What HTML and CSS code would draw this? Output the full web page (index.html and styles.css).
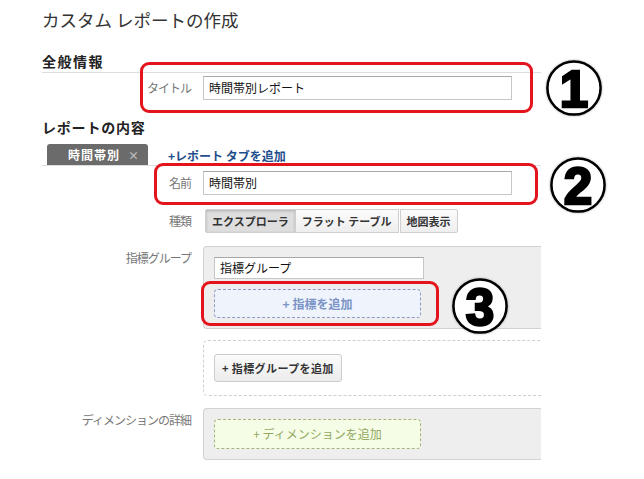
FILE: index.html
```html
<!DOCTYPE html>
<html lang="ja">
<head>
<meta charset="utf-8">
<title>カスタム レポートの作成</title>
<link rel="stylesheet" href="styles.css">
</head>
<body>
<div class="page">
  <h1 class="title">カスタム レポートの作成</h1>

  <h2 class="sec-head">全般情報</h2>
  <div class="row row-title">
    <div class="lbl">タイトル</div>
    <div class="field"><div class="txt">時間帯別レポート</div></div>
  </div>

  <h2 class="sec-head2">レポートの内容</h2>
  <div class="tabs">
    <div class="tab">時間帯別<span class="x">×</span></div>
    <a class="addtab">+レポート タブを追加</a>
  </div>

  <div class="row row-name">
    <div class="lbl">名前</div>
    <div class="field"><div class="txt">時間帯別</div></div>
  </div>

  <div class="row row-type">
    <div class="lbl">種類</div>
    <div class="field">
      <div class="btns">
        <span class="btn sel">エクスプローラ</span><span class="btn">フラット テーブル</span><span class="btn">地図表示</span>
      </div>
    </div>
  </div>

  <div class="row row-metric">
    <div class="lbl lbl-top">指標グループ</div>
    <div class="panel">
      <div class="txt txt-small">指標グループ</div>
      <div class="drop drop-blue">+ 指標を追加</div>
    </div>
  </div>

  <div class="row row-addgroup">
    <div class="lbl"></div>
    <div class="dash">
      <span class="btn-add">+ 指標グループを追加</span>
    </div>
  </div>

  <div class="row row-dim">
    <div class="lbl lbl-top">ディメンションの詳細</div>
    <div class="panel panel-dim">
      <div class="drop drop-green">+ ディメンションを追加</div>
    </div>
  </div>

  <div class="mark mark1"></div>
  <div class="mark mark2"></div>
  <div class="mark mark3"></div>

  <svg class="num num1" viewBox="0 0 60 60"><circle cx="30" cy="30" r="27.5"/><text x="30" y="49.5">1</text></svg>
  <svg class="num num2" viewBox="0 0 60 60"><circle cx="30" cy="30" r="27.5"/><text x="30" y="49.5">2</text></svg>
  <svg class="num num3" viewBox="0 0 60 60"><circle cx="30" cy="30" r="27.5"/><text x="30" y="49.5">3</text></svg>
</div>
</body>
</html>
```

FILE: styles.css
```css
* { box-sizing: border-box; }
html, body { margin: 0; padding: 0; background: #fff; }
body {
  width: 644px;
  height: 479px;
  overflow: hidden;
  font-family: "Noto Sans CJK JP", "Liberation Sans", sans-serif;
  color: #333;
}
.page {
  position: relative;
  width: 644px;
  height: 479px;
  padding: 9px 0 0 42px;
}
.title {
  margin: 0;
  font-size: 17.5px;
  line-height: 22px;
  font-weight: normal;
  color: #333;
}
.sec-head {
  margin: 21px 0 0;
  width: 499px;
  font-size: 14px;
  line-height: 18px;
  font-weight: bold;
  letter-spacing: 1.5px;
  padding-bottom: 2px;
  border-bottom: 1px solid #ddd;
  color: #222;
}
.sec-head2 {
  margin: 18px 0 0;
  font-size: 14px;
  line-height: 18px;
  font-weight: bold;
  letter-spacing: 0.8px;
  color: #222;
}
.row {
  display: grid;
  grid-template-columns: 150px 338px;
  column-gap: 11px;
  width: 499px;
}
.lbl {
  text-align: right;
  font-size: 12px;
  letter-spacing: -1px;
  padding-right: 1px;
  line-height: 24px;
  color: #777;
}
.lbl-top { line-height: 16px; padding-top: 4px; }
.row-title { margin-top: 3px; }
.txt {
  width: 309px;
  height: 24px;
  border: 1px solid #c6c6c6;
  border-top-color: #a8a8a8;
  background: #fff;
  font-size: 12px;
  line-height: 22px;
  padding-left: 5px;
  color: #111;
}
.txt-small { width: 210px; height: 22px; line-height: 20px; }

.tabs {
  margin-top: 8px;
  width: 499px;
  height: 22px;
  padding-left: 5px;
  display: flex;
  align-items: flex-end;
  border-bottom: 1px solid #ddd;
}
.tab {
  width: 101px;
  height: 21px;
  background: #6b6b6b;
  border-radius: 3px 3px 0 0;
  color: #fff;
  font-size: 12px;
  font-weight: bold;
  letter-spacing: 1px;
  line-height: 21px;
  padding-left: 21px;
}
.tab .x {
  margin-left: 8px;
  color: #bdbdbd;
  font-size: 11px;
}
.addtab {
  margin-left: 20px;
  align-self: center;
  padding-top: 2px;
  font-size: 12px;
  font-weight: bold;
  color: #1f4e8c;
  line-height: 16px;
}

.row-name { margin-top: 5px; }
.row-type { margin-top: 14px; }
.btns {
  display: flex;
  margin-left: 2px;
  height: 24px;
}
.btn {
  display: block;
  height: 24px;
  padding: 0 6px;
  border: 1px solid #cfcfcf;
  margin-left: -1px;
  background: linear-gradient(#fbfbfb, #eeeeee);
  font-size: 11px;
  font-weight: bold;
  line-height: 22px;
  color: #333;
}
.btn:first-child { border-radius: 2px 0 0 2px; margin-left: 0; }
.btn:last-child { border-radius: 0 2px 2px 0; margin-left: 1px; }
.btn.sel {
  background: #dedede;
  box-shadow: inset 0 1px 3px rgba(0,0,0,0.2);
}

.row-metric { margin-top: 13px; }
.panel {
  background: #eeeeee;
  border: 1px solid #d2d2d2;
  border-right: none;
  border-radius: 4px 0 0 4px;
  padding: 10px 0 10px 10px;
}
.drop {
  width: 207px;
  height: 29px;
  margin-top: 10px;
  border-radius: 4px;
  text-align: center;
  font-size: 12px;
  line-height: 27px;
}
.drop-blue {
  border: 1px dashed #8e9bc6;
  background: #eef3fc;
  color: #7b93c6;
  font-weight: bold;
}
.row-addgroup { margin-top: 11px; }
.dash {
  height: 56px;
  border: 1px dashed #cfcfcf;
  border-right: none;
  border-radius: 5px 0 0 5px;
  padding: 13px 0 0 10px;
}
.btn-add {
  display: inline-block;
  height: 28px;
  padding: 0 7px;
  border: 1px solid #cccccc;
  border-radius: 3px;
  background: linear-gradient(#fbfbfb, #ececec);
  font-size: 11px;
  font-weight: bold;
  letter-spacing: 0.4px;
  line-height: 26px;
  color: #333;
}
.row-dim { margin-top: 12px; }
.panel-dim { height: 52px; }
.drop-green {
  margin-top: 0;
  height: 30px;
  line-height: 28px;
  border: 1px dashed #a3b57a;
  background: #f5fde7;
  color: #93a862;
}

.mark {
  position: absolute;
  border: 3px solid #e3141c;
  border-radius: 9px;
}
.mark1 { left: 140px; top: 62px; width: 393px; height: 51px; }
.mark2 { left: 154px; top: 163px; width: 384px; height: 42px; }
.mark3 { left: 201px; top: 281px; width: 238px; height: 45px; }

.num {
  position: absolute;
  width: 58px;
  height: 58px;
  overflow: visible;
  filter: drop-shadow(0 0 1px rgba(0,0,0,0.35));
}
.num circle { fill: #fff; stroke: #000; stroke-width: 2.6; }
.num text {
  font-family: "Liberation Sans", "DejaVu Sans", sans-serif;
  font-weight: bold;
  font-size: 53px;
  text-anchor: middle;
  fill: #000;
  stroke: #000;
  stroke-width: 2.6;
}
.num1 { left: 545px; top: 59px; }
.num2 { left: 549px; top: 156px; }
.num3 { left: 451px; top: 277px; }
```
